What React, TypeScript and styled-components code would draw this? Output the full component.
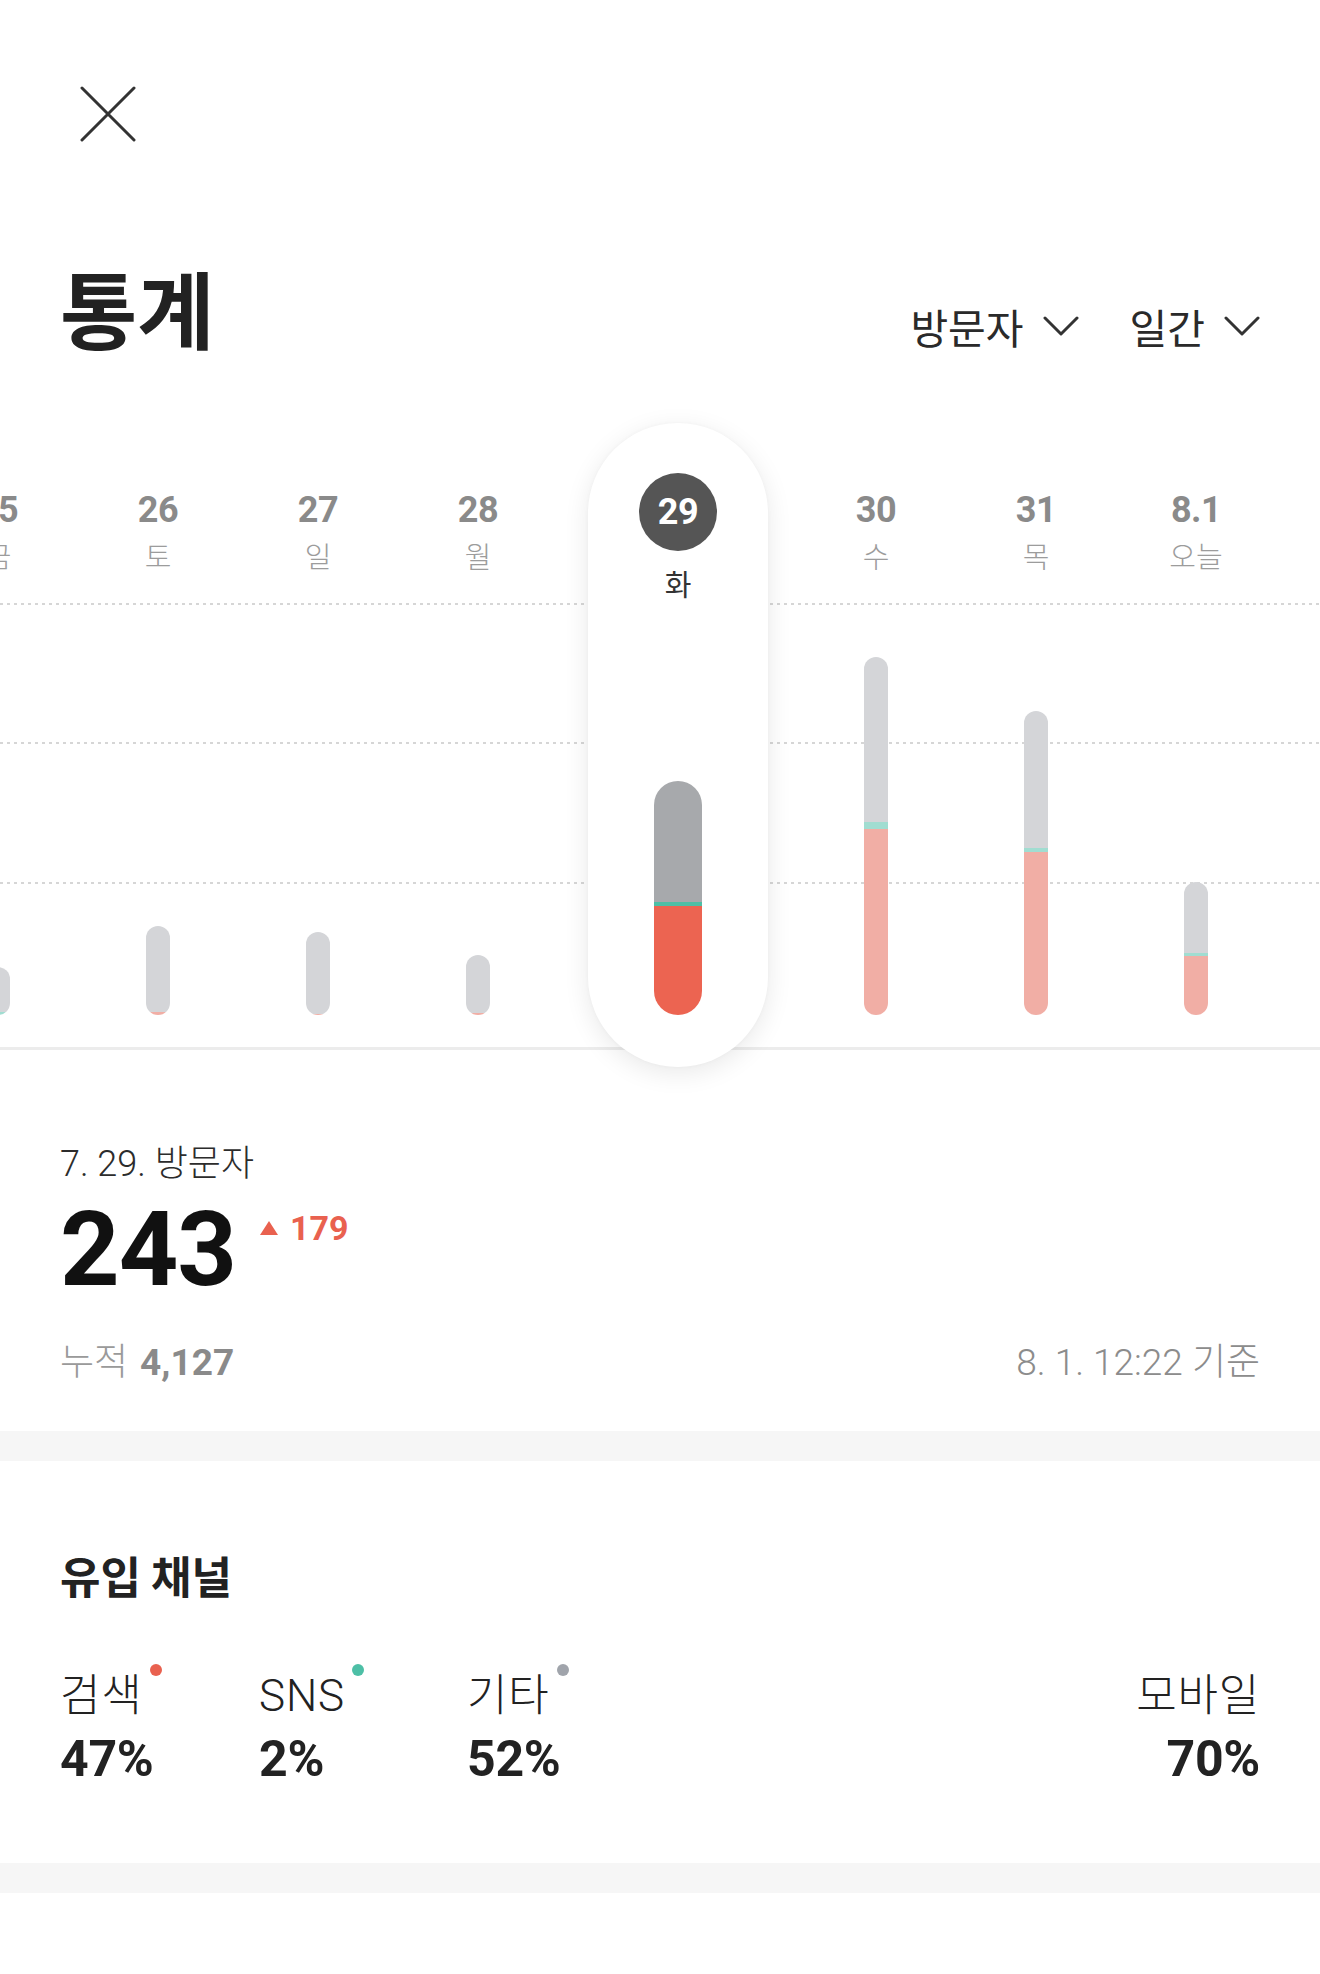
import React from 'react';
import styled, { createGlobalStyle } from 'styled-components';

const GlobalStyle = createGlobalStyle`
  html, body { margin: 0; padding: 0; background: #fff; }
  body {
    font-family: Roboto, "Noto Sans CJK KR", "Noto Sans", sans-serif;
    -webkit-font-smoothing: antialiased;
  }
  * { box-sizing: border-box; }
`;

const Page = styled.div`
  width: 1320px;
  height: 1974px;
  overflow: hidden;
  background: #fff;
  color: #222;
`;

const TopBar = styled.header`
  height: 142px;
  padding: 86px 0 0 80px;
`;

const CloseButton = styled.button`
  display: block;
  width: 56px;
  height: 56px;
  padding: 0;
  border: 0;
  background: none;
`;

const TitleRow = styled.div`
  display: flex;
  align-items: center;
  justify-content: space-between;
  height: 88px;
  margin-top: 121px;
  padding: 0 60px;
`;

const Title = styled.h1`
  margin: 0;
  font-family: "Noto Sans CJK KR", sans-serif;
  font-weight: 700;
  font-size: 84px;
  line-height: 88px;
  color: #222;
`;

const Filters = styled.div`
  display: flex;
  align-items: center;
  gap: 51px;
  margin-top: 38px;
`;

const Filter = styled.button`
  display: flex;
  align-items: center;
  gap: 19px;
  padding: 0;
  border: 0;
  background: none;
  font-family: "Noto Sans CJK KR", sans-serif;
  font-weight: 400;
  font-size: 41px;
  line-height: 50px;
  color: #2a2a2a;
`;

const ChartArea = styled.section`
  height: 630px;
  margin-top: 69px;
  border-bottom: 3px solid #ececec;
  background-image:
    linear-gradient(to right, #d6d6d6 0 3px, transparent 3px 7px),
    linear-gradient(to right, #d6d6d6 0 3px, transparent 3px 7px),
    linear-gradient(to right, #d6d6d6 0 3px, transparent 3px 7px);
  background-size: 7px 2px;
  background-repeat: repeat-x;
  background-position: 0 183px, 0 322px, 0 462px;
`;

const Columns = styled.div`
  display: flex;
  height: 100%;
  margin-left: -82px;
`;

const Column = styled.div`
  flex: 0 0 160px;
  display: flex;
  flex-direction: column;
  align-items: center;
  padding: 70px 0 32px;
`;

const SelectedColumn = styled.div`
  position: relative;
  z-index: 1;
  flex: 0 0 180px;
  display: flex;
  flex-direction: column;
  align-items: center;
  margin: 3px 28px -20px 30px;
  padding: 50px 0 52px;
  border-radius: 90px;
  background: #fff;
  box-shadow: 0 6px 26px rgba(0, 0, 0, 0.09), 0 0 4px rgba(0, 0, 0, 0.03);
`;

const DayNumber = styled.div`
  font-family: Roboto, sans-serif;
  font-weight: 700;
  font-size: 36px;
  line-height: 40px;
  color: #8a8a8a;
  letter-spacing: -0.5px;
`;

const Weekday = styled.div<{ $active?: boolean }>`
  margin-top: ${(p) => (p.$active ? '15px' : '8px')};
  font-family: "Noto Sans CJK KR", sans-serif;
  font-weight: ${(p) => (p.$active ? 400 : 300)};
  font-size: 29px;
  line-height: 34px;
  color: ${(p) => (p.$active ? '#333' : '#9c9c9c')};
`;

const DayBadge = styled.div`
  display: flex;
  align-items: center;
  justify-content: center;
  width: 78px;
  height: 78px;
  border-radius: 50%;
  background: #555;
  color: #fff;
  font-family: Roboto, sans-serif;
  font-weight: 700;
  font-size: 36px;
  letter-spacing: -0.5px;
`;

const Bar = styled.div<{ $active?: boolean }>`
  display: flex;
  flex-direction: column;
  margin-top: auto;
  width: ${(p) => (p.$active ? '48px' : '24px')};
  border-radius: ${(p) => (p.$active ? '24px' : '12px')};
  overflow: hidden;
`;

const Segment = styled.div<{ $kind: 'other' | 'sns' | 'search'; $active?: boolean }>`
  flex: ${(p) => (p.$kind === 'other' ? '1 1 auto' : '0 0 auto')};
  background: ${(p) => {
    if (p.$kind === 'other') return p.$active ? '#a7a9ac' : '#d4d5d8';
    if (p.$kind === 'sns') return p.$active ? '#4dbfa6' : '#a1ddd1';
    return p.$active ? '#ec6451' : '#f1aea5';
  }};
`;

const Stats = styled.section`
  padding: 92px 60px 46px;
`;

const DateLabel = styled.div`
  font-family: Roboto, "Noto Sans CJK KR", sans-serif;
  font-weight: 300;
  font-size: 36px;
  line-height: 44px;
  color: #2c2c2c;
`;

const BigRow = styled.div`
  display: flex;
  align-items: flex-start;
  margin-top: 12px;
`;

const BigNumber = styled.div`
  font-family: Roboto, sans-serif;
  font-weight: 700;
  font-size: 104px;
  line-height: 104px;
  letter-spacing: -1px;
  color: #111;
`;

const Delta = styled.div`
  display: flex;
  align-items: center;
  gap: 12px;
  margin: 13px 0 0 24px;
  font-family: Roboto, sans-serif;
  font-weight: 700;
  font-size: 34px;
  line-height: 34px;
  color: #e9614f;
`;

const UpTriangle = styled.span`
  width: 0;
  height: 0;
  border-left: 9px solid transparent;
  border-right: 9px solid transparent;
  border-bottom: 14px solid #e9614f;
`;

const FooterRow = styled.div`
  display: flex;
  align-items: center;
  justify-content: space-between;
  margin-top: 39px;
  font-size: 37px;
  line-height: 44px;
`;

const Muted = styled.span`
  font-family: Roboto, "Noto Sans CJK KR", sans-serif;
  font-weight: 300;
  color: #9a9a9a;
`;

const MutedStrong = styled.span`
  margin-left: 12px;
  font-family: Roboto, sans-serif;
  font-weight: 700;
  color: #8a8a8a;
`;

const AsOf = styled.span`
  font-family: Roboto, "Noto Sans CJK KR", sans-serif;
  font-weight: 300;
  color: #8c8c8c;
`;

const Band = styled.div`
  height: 30px;
  background: #f6f6f6;
`;

const Channels = styled.section`
  height: 402px;
  padding: 88px 60px 0;
`;

const SectionTitle = styled.h2`
  margin: 0;
  font-family: "Noto Sans CJK KR", sans-serif;
  font-weight: 700;
  font-size: 44px;
  line-height: 52px;
  color: #222;
`;

const ChannelRow = styled.div`
  display: flex;
  justify-content: space-between;
  margin-top: 69px;
`;

const ChannelList = styled.div`
  display: grid;
  grid-template-columns: 199px 208px auto;
`;

const Channel = styled.div<{ $right?: boolean }>`
  display: flex;
  flex-direction: column;
  align-items: ${(p) => (p.$right ? 'flex-end' : 'flex-start')};
`;

const ChannelLabel = styled.div`
  display: flex;
  align-items: flex-start;
  font-family: Roboto, "Noto Sans CJK KR", sans-serif;
  font-weight: 300;
  font-size: 44px;
  line-height: 52px;
  letter-spacing: 0.8px;
  color: #222;
`;

const Dot = styled.span<{ $color: string }>`
  width: 12px;
  height: 12px;
  margin: -6px 0 0 7px;
  border-radius: 50%;
  background: ${(p) => p.$color};
`;

const ChannelValue = styled.div`
  margin-top: 9px;
  font-family: Roboto, sans-serif;
  font-weight: 700;
  font-size: 50px;
  line-height: 56px;
  letter-spacing: -0.3px;
  color: #222;
`;

const CloseIcon = () => (
  <svg width="56" height="56" viewBox="0 0 56 56" fill="none">
    <path d="M2 2 L54 54 M54 2 L2 54" stroke="#333" strokeWidth="3" strokeLinecap="round" />
  </svg>
);

const Chevron = () => (
  <svg width="36" height="20" viewBox="0 0 36 20" fill="none">
    <path d="M2 2 L18 18 L34 2" stroke="#333" strokeWidth="3" strokeLinecap="round" strokeLinejoin="round" />
  </svg>
);

type Day = {
  num: string;
  wd: string;
  total: number;
  sns: number;
  search: number;
  active?: boolean;
};

const days: Day[] = [
  { num: '25', wd: '금', total: 48, sns: 3, search: 0 },
  { num: '26', wd: '토', total: 89, sns: 0, search: 3 },
  { num: '27', wd: '일', total: 83, sns: 0, search: 1 },
  { num: '28', wd: '월', total: 60, sns: 0, search: 2 },
  { num: '29', wd: '화', total: 234, sns: 4, search: 109, active: true },
  { num: '30', wd: '수', total: 358, sns: 7, search: 186 },
  { num: '31', wd: '목', total: 304, sns: 4, search: 163 },
  { num: '8.1', wd: '오늘', total: 133, sns: 3, search: 59 },
];

const DayBar = ({ d }: { d: Day }) => (
  <Bar $active={d.active} style={{ height: d.total }}>
    <Segment $kind="other" $active={d.active} />
    <Segment $kind="sns" $active={d.active} style={{ height: d.sns }} />
    <Segment $kind="search" $active={d.active} style={{ height: d.search }} />
  </Bar>
);

const channels = [
  { label: '검색', value: '47%', color: '#e9614f' },
  { label: 'SNS', value: '2%', color: '#4dbfa6' },
  { label: '기타', value: '52%', color: '#a0a4ab' },
];

export default function App() {
  return (
    <Page>
      <GlobalStyle />
      <TopBar>
        <CloseButton aria-label="닫기">
          <CloseIcon />
        </CloseButton>
      </TopBar>

      <TitleRow>
        <Title>통계</Title>
        <Filters>
          <Filter>
            방문자
            <Chevron />
          </Filter>
          <Filter>
            일간
            <Chevron />
          </Filter>
        </Filters>
      </TitleRow>

      <ChartArea>
        <Columns>
          {days.map((d) =>
            d.active ? (
              <SelectedColumn key={d.num}>
                <DayBadge>{d.num}</DayBadge>
                <Weekday $active>{d.wd}</Weekday>
                <DayBar d={d} />
              </SelectedColumn>
            ) : (
              <Column key={d.num}>
                <DayNumber>{d.num}</DayNumber>
                <Weekday>{d.wd}</Weekday>
                <DayBar d={d} />
              </Column>
            )
          )}
        </Columns>
      </ChartArea>

      <Stats>
        <DateLabel>7. 29. 방문자</DateLabel>
        <BigRow>
          <BigNumber>243</BigNumber>
          <Delta>
            <UpTriangle />
            179
          </Delta>
        </BigRow>
        <FooterRow>
          <span>
            <Muted>누적</Muted>
            <MutedStrong>4,127</MutedStrong>
          </span>
          <AsOf>8. 1. 12:22 기준</AsOf>
        </FooterRow>
      </Stats>

      <Band />

      <Channels>
        <SectionTitle>유입 채널</SectionTitle>
        <ChannelRow>
          <ChannelList>
            {channels.map((c) => (
              <Channel key={c.label}>
                <ChannelLabel>
                  {c.label}
                  <Dot $color={c.color} />
                </ChannelLabel>
                <ChannelValue>{c.value}</ChannelValue>
              </Channel>
            ))}
          </ChannelList>
          <Channel $right>
            <ChannelLabel>모바일</ChannelLabel>
            <ChannelValue>70%</ChannelValue>
          </Channel>
        </ChannelRow>
      </Channels>

      <Band />
    </Page>
  );
}
